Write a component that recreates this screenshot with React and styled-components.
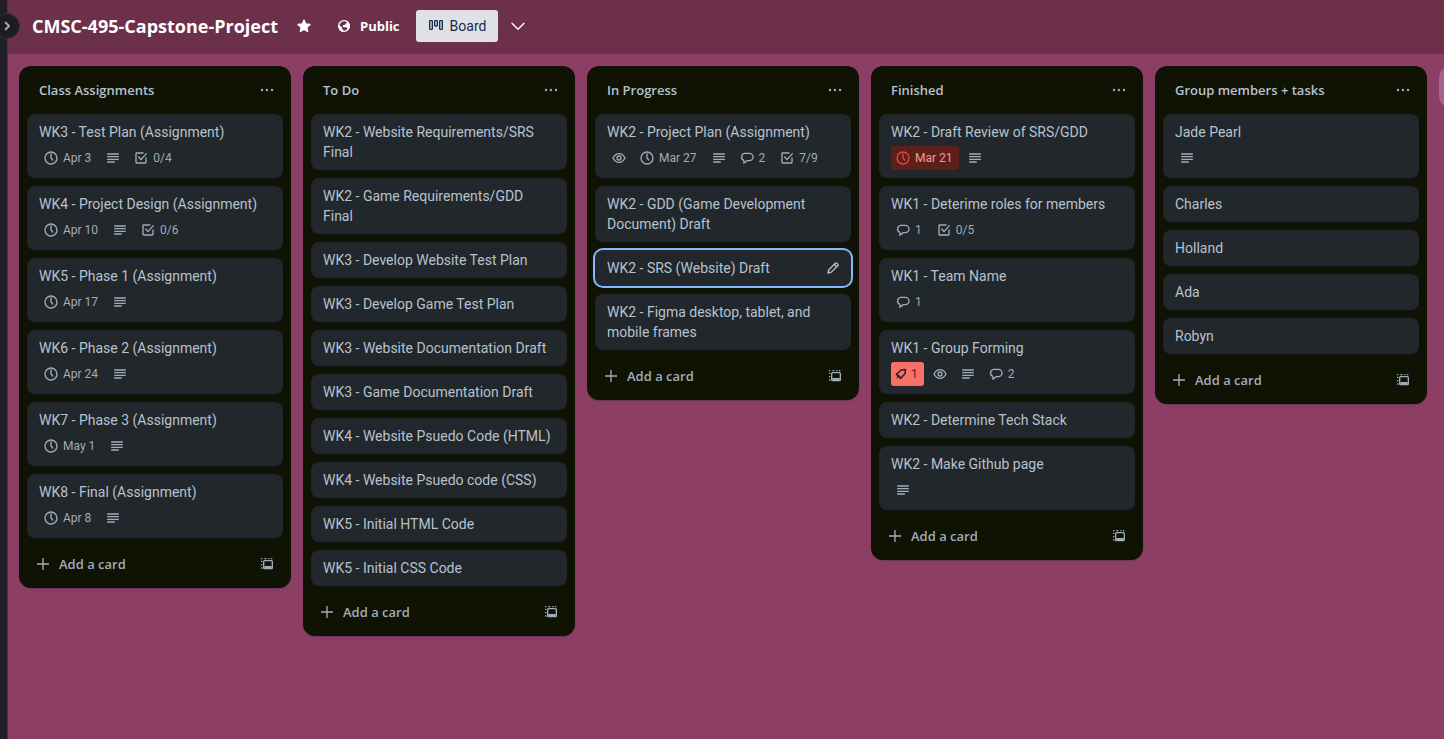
import React from "react";
import styled, { createGlobalStyle, css } from "styled-components";

const bodyFont = `Roboto, "Noto Sans", sans-serif`;
const headingFont = `"Open Sans", "Noto Sans", sans-serif`;

const GlobalStyle = createGlobalStyle`
  *, *::before, *::after { box-sizing: border-box; }
  html, body { margin: 0; min-height: 100%; }
  body {
    background: #8d3e64;
    color: #b6c2cf;
    font-family: ${bodyFont};
    font-size: 14px;
    line-height: 20px;
    overflow: hidden;
  }
  button, a { font: inherit; color: inherit; text-decoration: none; }
  button { border: 0; padding: 0; background: none; cursor: pointer; }
  h1, h2, ul { margin: 0; padding: 0; }
  ul { list-style: none; }
`;

const Page = styled.div`
  display: flex;
  min-height: 100vh;
`;

const CollapsedSidebar = styled.aside`
  position: relative;
  flex: 0 0 8px;
  background: #211f27;
  border-right: 1px solid #4c3442;
`;

const ExpandButton = styled.button`
  position: absolute;
  top: 13px;
  left: -6px;
  z-index: 2;
  display: flex;
  align-items: center;
  justify-content: center;
  width: 26px;
  height: 26px;
  border: 1px solid #35313a;
  border-radius: 50%;
  background: #1c1c21;
  color: #9fadbc;
`;

const Main = styled.main`
  flex: 1;
  min-width: 0;
  overflow: hidden;
`;

const BoardHeader = styled.header`
  display: flex;
  align-items: center;
  gap: 4px;
  height: 54px;
  padding: 0 24px 2px;
  background: #6c304a;
  color: #fff;
`;

const BoardTitle = styled.h1`
  margin-right: 6px;
  font-family: ${headingFont};
  font-size: 18px;
  font-weight: 700;
  line-height: 32px;
`;

const HeaderButton = styled.button`
  display: flex;
  align-items: center;
  justify-content: center;
  gap: 8px;
  height: 32px;
  padding: 0 ${(p) => (p.$iconOnly ? "8px" : "12px")};
  border-radius: 3px;
  ${(p) =>
    p.$strong &&
    css`
      font-family: ${headingFont};
      font-size: 13px;
      font-weight: 700;
    `}
  ${(p) =>
    p.$active &&
    css`
      gap: 6px;
      background: #dfe1e6;
      color: #172b4d;
    `}
`;

const Lists = styled.div`
  display: flex;
  align-items: flex-start;
  gap: 12px;
  padding: 12px 11px;
`;

const ListPanel = styled.section`
  flex: 0 0 272px;
  padding: 8px;
  border-radius: 12px;
  background: #101204;
  box-shadow: 0 1px 1px #091e4240;
`;

const ListHeader = styled.div`
  display: flex;
  align-items: center;
  justify-content: space-between;
  height: 32px;
  margin-bottom: 8px;
  padding-left: 12px;
`;

const ListTitle = styled.h2`
  font-family: ${headingFont};
  font-size: 13px;
  font-weight: 600;
  line-height: 20px;
`;

const IconButton = styled.button`
  display: flex;
  align-items: center;
  justify-content: center;
  width: 32px;
  height: 32px;
  color: #9fadbc;
`;

const CardStack = styled.ul`
  display: flex;
  flex-direction: column;
  gap: 8px;
`;

const CardBox = styled.li`
  padding: 8px 12px;
  border-radius: 8px;
  background: #22272b;
  box-shadow: ${(p) => (p.$focused ? "0 0 0 2px #85b8ff" : "0 1px 1px #091e4240")};
`;

const CardTop = styled.div`
  display: flex;
  align-items: center;
  justify-content: space-between;
`;

const CardLink = styled.a`
  color: #b6c2cf;
`;

const EditButton = styled.button`
  display: flex;
  width: 16px;
  height: 16px;
  margin-right: -2px;
`;

const Badges = styled.div`
  display: flex;
  gap: 4px;
  margin-top: 4px;
`;

const badgeTones = {
  plain: { bg: "transparent", icon: "#9fadbc", text: "#9fadbc" },
  overdue: { bg: "#5d1f1a", icon: "#e2483d", text: "#fd9891" },
  votes: { bg: "#f87168", icon: "#1d2125", text: "#5d1f1a" },
};

const BadgeBox = styled.span`
  display: flex;
  align-items: center;
  gap: 4px;
  height: 24px;
  padding: 4px;
  padding-right: ${(p) => (p.$hasText ? "6px" : "4px")};
  border-radius: 3px;
  background: ${(p) => badgeTones[p.$tone].bg};
  color: ${(p) => badgeTones[p.$tone].text};
  font-size: 12px;
  line-height: 16px;

  svg { color: ${(p) => badgeTones[p.$tone].icon}; }
`;

const ListFooter = styled.div`
  display: flex;
  align-items: center;
  justify-content: space-between;
  margin-top: 10px;
`;

const AddCardButton = styled.button`
  display: flex;
  flex: 1;
  align-items: center;
  gap: 8px;
  height: 32px;
  padding-left: 8px;
  color: #9fadbc;
  font-family: ${headingFont};
  font-size: 13px;
  font-weight: 600;
`;

const AddListButton = styled.button`
  flex: 0 0 272px;
  height: 42px;
  border-radius: 12px;
  background: #a5658a;
`;

const Svg = styled.svg`
  display: block;
  flex: none;
  fill: none;
`;

function Icon({ size = 16, strokeWidth = 2, children, ...rest }) {
  return (
    <Svg
      width={size}
      height={size}
      viewBox="0 0 24 24"
      stroke="currentColor"
      strokeWidth={strokeWidth}
      aria-hidden="true"
      {...rest}
    >
      {children}
    </Svg>
  );
}

const icons = {
  clock: (
    <Icon>
      <circle cx="12" cy="12" r="9" />
      <path d="M12 6v6l2.500 3" strokeLinecap="round" />
    </Icon>
  ),
  description: (
    <Icon strokeLinecap="round">
      <path d="M4 6h16M4 10h16M4 14h16M4 18h10" />
    </Icon>
  ),
  checklist: (
    <Icon strokeLinecap="round" strokeLinejoin="round">
      <path d="M15 4.500H5.500a1 1 0 0 0-1 1v13a1 1 0 0 0 1 1h13a1 1 0 0 0 1-1V12" />
      <path d="m8.500 10.500 3.500 4 8-9" />
    </Icon>
  ),
  eye: (
    <Icon>
      <path d="M3 12c2-4 5-6.500 9-6.500s7 2.500 9 6.500c-2 4-5 6.500-9 6.500s-7-2.500-9-6.500z" strokeLinejoin="round" />
      <circle cx="12" cy="12" r="3" />
    </Icon>
  ),
  comment: (
    <Icon>
      <path
        d="M8.500 5h7a5.500 5.500 0 0 1 0 11h-3.500c-1 1.800-3 3.200-5 3.500.700-1.200.800-2.700.200-4A5.500 5.500 0 0 1 8.500 5z"
        strokeLinejoin="round"
      />
    </Icon>
  ),
  vote: (
    <Icon size={12} strokeWidth="3" strokeLinejoin="round">
      <path d="M21 3l-8.500 1L2.500 12.500l5 3L11 21l9-9.500z" />
      <path d="M7.500 15.500 4 20" />
    </Icon>
  ),
};

function Badge({ kind, tone = "plain", children }) {
  return (
    <BadgeBox $tone={tone} $hasText={children != null}>
      {icons[kind]}
      {children}
    </BadgeBox>
  );
}

function Card({ title, badges, focused }) {
  return (
    <CardBox $focused={focused}>
      <CardTop>
        <CardLink href="#card">{title}</CardLink>
        {focused && (
          <EditButton aria-label="Edit card">
            <Icon strokeLinejoin="round">
              <path d="M4.500 19.500l1.300-5L15.500 4.800a1.600 1.600 0 0 1 2.300 0l1.400 1.400a1.600 1.600 0 0 1 0 2.300L9.500 18.200z" />
              <path d="M14 6.500l3.500 3.500" />
            </Icon>
          </EditButton>
        )}
      </CardTop>
      {badges && (
        <Badges>
          {badges.map(([kind, text, tone]) => (
            <Badge key={kind} kind={kind} tone={tone}>
              {text}
            </Badge>
          ))}
        </Badges>
      )}
    </CardBox>
  );
}

function List({ title, cards }) {
  return (
    <ListPanel>
      <ListHeader>
        <ListTitle>{title}</ListTitle>
        <IconButton aria-label="List actions">
          <Icon>
            <g fill="currentColor" stroke="none">
              <circle cx="4.500" cy="12" r="1.800" />
              <circle cx="12" cy="12" r="1.800" />
              <circle cx="19.500" cy="12" r="1.800" />
            </g>
          </Icon>
        </IconButton>
      </ListHeader>
      <CardStack>
        {cards.map((card) => (
          <Card key={card.title} {...card} />
        ))}
      </CardStack>
      <ListFooter>
        <AddCardButton>
          <Icon>
            <path d="M12 3v18M3 12h18" />
          </Icon>
          Add a card
        </AddCardButton>
        <IconButton aria-label="Create from template">
          <Icon>
            <rect x="7" y="7" width="13" height="12" rx="1.500" />
            <path d="M8 16.500h11" strokeWidth="3" />
            <path d="M4 19v-2M4 14v-2M4 9V7M3 4h2M8 4h3M14 4h2M18 4h2" />
          </Icon>
        </IconButton>
      </ListFooter>
    </ListPanel>
  );
}

const lists = [
  {
    title: "Class Assignments",
    cards: [
      { title: "WK3 - Test Plan (Assignment)", badges: [["clock", "Apr 3"], ["description"], ["checklist", "0/4"]] },
      { title: "WK4 - Project Design (Assignment)", badges: [["clock", "Apr 10"], ["description"], ["checklist", "0/6"]] },
      { title: "WK5 - Phase 1 (Assignment)", badges: [["clock", "Apr 17"], ["description"]] },
      { title: "WK6 - Phase 2 (Assignment)", badges: [["clock", "Apr 24"], ["description"]] },
      { title: "WK7 - Phase 3 (Assignment)", badges: [["clock", "May 1"], ["description"]] },
      { title: "WK8 - Final (Assignment)", badges: [["clock", "Apr 8"], ["description"]] },
    ],
  },
  {
    title: "To Do",
    cards: [
      { title: "WK2 - Website Requirements/SRS Final" },
      { title: "WK2 - Game Requirements/GDD Final" },
      { title: "WK3 - Develop Website Test Plan" },
      { title: "WK3 - Develop Game Test Plan" },
      { title: "WK3 - Website Documentation Draft" },
      { title: "WK3 - Game Documentation Draft" },
      { title: "WK4 - Website Psuedo Code (HTML)" },
      { title: "WK4 - Website Psuedo code (CSS)" },
      { title: "WK5 - Initial HTML Code" },
      { title: "WK5 - Initial CSS Code" },
    ],
  },
  {
    title: "In Progress",
    cards: [
      {
        title: "WK2 - Project Plan (Assignment)",
        badges: [["eye"], ["clock", "Mar 27"], ["description"], ["comment", "2"], ["checklist", "7/9"]],
      },
      { title: "WK2 - GDD (Game Development Document) Draft" },
      { title: "WK2 - SRS (Website) Draft", focused: true },
      { title: "WK2 - Figma desktop, tablet, and mobile frames" },
    ],
  },
  {
    title: "Finished",
    cards: [
      { title: "WK2 - Draft Review of SRS/GDD", badges: [["clock", "Mar 21", "overdue"], ["description"]] },
      { title: "WK1 - Deterime roles for members", badges: [["comment", "1"], ["checklist", "0/5"]] },
      { title: "WK1 - Team Name", badges: [["comment", "1"]] },
      { title: "WK1 - Group Forming", badges: [["vote", "1", "votes"], ["eye"], ["description"], ["comment", "2"]] },
      { title: "WK2 - Determine Tech Stack" },
      { title: "WK2 - Make Github page", badges: [["description"]] },
    ],
  },
  {
    title: "Group members + tasks",
    cards: [
      { title: "Jade Pearl", badges: [["description"]] },
      { title: "Charles" },
      { title: "Holland" },
      { title: "Ada" },
      { title: "Robyn" },
    ],
  },
];

export default function App() {
  return (
    <Page>
      <GlobalStyle />
      <CollapsedSidebar>
        <ExpandButton aria-label="Expand sidebar">
          <Icon strokeWidth="3" strokeLinecap="round" strokeLinejoin="round">
            <path d="m10 7 5 5-5 5" />
          </Icon>
        </ExpandButton>
      </CollapsedSidebar>
      <Main>
        <BoardHeader>
          <BoardTitle>CMSC-495-Capstone-Project</BoardTitle>
          <HeaderButton $iconOnly aria-label="Star board">
            <Icon>
              <path
                fill="currentColor"
                strokeLinejoin="round"
                d="m12 3 2.600 6 6.400.600-4.800 4.300 1.400 6.400L12 17l-5.600 3.300 1.400-6.400L3 9.600 9.400 9z"
              />
            </Icon>
          </HeaderButton>
          <HeaderButton $strong>
            <Icon>
              <circle cx="12" cy="12" r="8" />
              <path
                fill="currentColor"
                stroke="none"
                d="M4 10l5 4v2l2 2v3C7 21 3 17 4 10zM10 4h6c3 2 5 5 5 9l-2 4h-2l-1-3h-5l-1-2 2-2h2l1-2 2-1-1-2z"
              />
            </Icon>
            Public
          </HeaderButton>
          <HeaderButton $active>
            <Icon>
              <rect x="2.500" y="4" width="4" height="13" rx="1" />
              <rect x="10" y="4" width="4" height="8" rx="1" />
              <rect x="17.500" y="4" width="4" height="13" rx="1" />
            </Icon>
            Board
          </HeaderButton>
          <HeaderButton $iconOnly aria-label="More views">
            <Icon strokeLinecap="round" strokeLinejoin="round">
              <path d="m3 8 9 9 9-9" />
            </Icon>
          </HeaderButton>
        </BoardHeader>
        <Lists>
          {lists.map((list) => (
            <List key={list.title} {...list} />
          ))}
          <AddListButton aria-label="Add another list" />
        </Lists>
      </Main>
    </Page>
  );
}
